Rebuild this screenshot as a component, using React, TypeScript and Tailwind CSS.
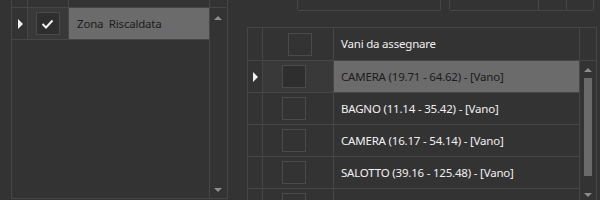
import React from 'react'

const font = { fontFamily: '"Noto Sans", "Open Sans", sans-serif' }

function RowArrow() {
  return (
    <div className="h-0 w-0 border-y-[5px] border-l-[5px] border-y-transparent border-l-[#f0f0f0]" />
  )
}

function UpArrow() {
  return <div className="h-0 w-0 border-x-[4px] border-b-[4px] border-x-transparent border-b-[#8c8c8c]" />
}

function DownArrow() {
  return <div className="h-0 w-0 border-x-[4px] border-t-[4px] border-x-transparent border-t-[#8c8c8c]" />
}

function CheckBox({ checked, dark }: { checked?: boolean; dark?: boolean }) {
  return (
    <div
      className={`flex h-[23px] w-[24px] items-center justify-center border border-[#4a4a4a] ${
        dark ? 'bg-[#2e2e2e]' : 'bg-transparent'
      }`}
    >
      {checked && (
        <svg width="13" height="10" viewBox="0 0 13 10">
          <path d="M1.5 5 L5 8.5 L11.5 1.5" fill="none" stroke="#f2f2f2" strokeWidth="2" />
        </svg>
      )}
    </div>
  )
}

function LeftGrid() {
  return (
    <div className="flex h-[199px] w-[217px] border-x border-b border-[#464646]">
      <div className="flex w-[198px] flex-col border-r border-[#464646]">
        {/* header */}
        <div className="flex h-[8px] shrink-0 border-b border-[#464646]">
          <div className="w-[16px] border-r border-[#464646]" />
          <div className="w-[41px] border-r border-[#464646]" />
          <div className="flex-1" />
        </div>
        {/* row */}
        <div className="flex h-[32px] shrink-0 border-b border-[#464646]">
          <div className="flex w-[16px] items-center justify-center border-r border-[#464646] pl-[1px]">
            <RowArrow />
          </div>
          <div className="flex w-[41px] items-center justify-center border-r border-[#464646] bg-[#393939] pr-[1px]">
            <CheckBox checked dark />
          </div>
          <div className="flex flex-1 items-center whitespace-pre bg-[#6b6b6b] pl-[8px] text-[11.5px] tracking-[-0.2px] text-[#1c1c1c]">
            Zona  Riscaldata
          </div>
        </div>
      </div>
      <div className="flex w-[16px] flex-col">
        <div className="h-[8px] shrink-0 border-b border-[#464646]" />
        <div className="flex flex-1 flex-col items-center justify-between pb-[6px] pt-[8px]">
          <UpArrow />
          <DownArrow />
        </div>
      </div>
    </div>
  )
}

const rows = [
  'CAMERA (19.71 - 64.62) - [Vano]',
  'BAGNO (11.14 - 35.42) - [Vano]',
  'CAMERA (16.17 - 54.14) - [Vano]',
  'SALOTTO (39.16 - 125.48) - [Vano]',
  '',
]

function RightGrid() {
  return (
    <div className="flex h-[200px] w-[350px] shrink-0 border-x border-t border-[#464646]">
      <div className="flex w-[332px] flex-col border-r border-[#464646]">
        <div className="flex h-[33px] shrink-0 border-b border-[#464646]">
          <div className="w-[15px] border-r border-[#464646]" />
          <div className="flex w-[71px] items-center justify-center border-r border-[#464646] pl-[3px]">
            <CheckBox />
          </div>
          <div className="flex flex-1 items-center pl-[7px] text-[11.5px] tracking-[-0.2px] text-[#f0f0f0]">
            Vani da assegnare
          </div>
        </div>
        {rows.map((r, i) => {
          const sel = i === 0
          return (
            <div key={i} className="flex h-[32px] shrink-0 border-b border-[#464646]">
              <div className="flex w-[15px] items-center justify-center border-r border-[#464646] pl-[1px]">
                {sel && <RowArrow />}
              </div>
              <div
                className={`flex w-[71px] items-center justify-center border-r border-[#464646] pr-[8px] ${
                  sel ? 'bg-[#393939]' : ''
                }`}
              >
                <CheckBox dark={sel} />
              </div>
              <div
                className={`flex flex-1 items-center pl-[7px] text-[11.5px] tracking-[-0.2px] ${
                  sel ? 'bg-[#6b6b6b] text-[#1c1c1c]' : 'text-[#f0f0f0]'
                }`}
              >
                {r}
              </div>
            </div>
          )
        })}
      </div>
      <div className="flex w-[16px] flex-col">
        <div className="h-[33px] shrink-0 border-b border-[#464646]" />
        <div className="flex flex-col items-center pt-[7px]">
          <UpArrow />
          <div className="mt-[6px] h-[98px] w-[8px] bg-[#6a6a6a]" />
          <div className="mt-[17px]">
            <DownArrow />
          </div>
        </div>
      </div>
    </div>
  )
}

export default function App() {
  return (
    <div className="flex h-[200px] w-[600px] overflow-hidden bg-[#333333]" style={font}>
      <div className="shrink-0 pl-[11px]">
        <LeftGrid />
      </div>
      <div className="ml-[19px] flex shrink-0 flex-col">
        <div className="flex h-[27px] shrink-0 items-start pl-[50px]">
          <div className="h-[11px] w-[144px] rounded-b-[2px] border-x border-b border-[#464646]" />
          <div className="ml-[8px] flex h-[11px] w-[145px] rounded-b-[2px] border-x border-b border-[#464646]">
            <div className="w-[89px] border-r border-[#464646]" />
            <div className="w-[28px] border-r border-[#464646]" />
          </div>
        </div>
        <RightGrid />
      </div>
    </div>
  )
}
